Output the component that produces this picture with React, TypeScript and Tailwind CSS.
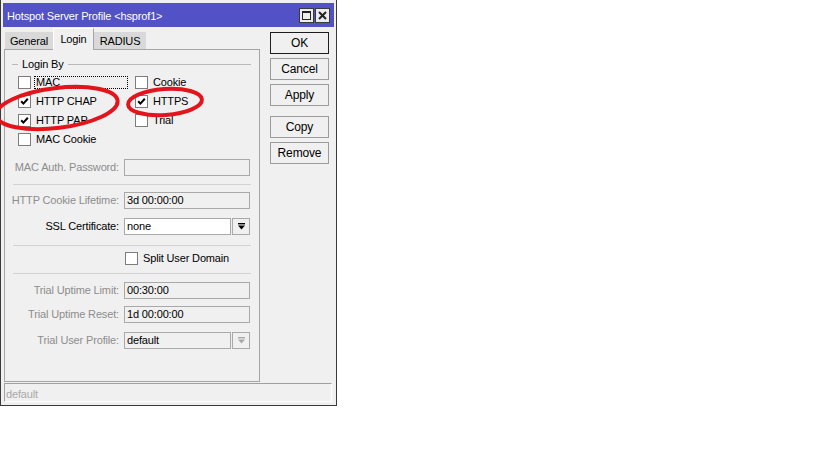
import React from "react";

function Check({ checked }: { checked?: boolean }) {
  return (
    <span className="flex h-[13px] w-[13px] shrink-0 items-center justify-center border border-[#7d7d7d] bg-white">
      {checked && (
        <svg width="9" height="9" viewBox="0 0 9 9">
          <path d="M1.2 4.2 L3.4 6.6 L7.8 1.8" stroke="#000" strokeWidth="2" fill="none" />
        </svg>
      )}
    </span>
  );
}

function DropIcon({ disabled }: { disabled?: boolean }) {
  const c = disabled ? "#a8a8a8" : "#000";
  return (
    <svg width="9" height="9" viewBox="0 0 9 9">
      <rect x="1" y="1" width="7" height="1.4" fill={c} />
      <path d="M1 3.6 H8 L4.5 7.6 Z" fill={c} />
    </svg>
  );
}

function FieldRow({
  label,
  value,
  disabled,
  white,
  dropdown,
  className,
}: {
  label: string;
  value?: string;
  disabled?: boolean;
  white?: boolean;
  dropdown?: boolean;
  className: string;
}) {
  return (
    <div className={`flex h-[17px] items-center ${className}`}>
      <span className={`w-[114px] text-right ${disabled ? "text-[#8d8d8d]" : "text-black"}`}>{label}</span>
      <div className="ml-[5px] flex h-full w-[126px] gap-px">
        <div
          className={`flex flex-1 items-center border border-[#a9a9a9] px-[2px] ${
            white ? "bg-white" : "bg-[#f0f0f0]"
          }`}
        >
          {value}
        </div>
        {dropdown && (
          <div className="flex w-[18px] items-center justify-center border border-[#a9a9a9] bg-[#f0f0f0]">
            <DropIcon disabled={disabled} />
          </div>
        )}
      </div>
    </div>
  );
}

function Btn({ label, primary, className = "" }: { label: string; primary?: boolean; className?: string }) {
  return (
    <div
      className={`flex h-[22px] w-[59px] items-center justify-center border bg-[#f0f0f0] text-[12px] ${
        primary ? "border-[#1e1e1e]" : "border-[#9c9c9c]"
      } ${className}`}
    >
      {label}
    </div>
  );
}

const Sep = ({ className }: { className: string }) => (
  <div className={`mx-[8px] h-px bg-[#d2d2d2] ${className}`} />
);

export default function App() {
  return (
    <div className="h-[460px] w-[819px] bg-white font-['Liberation_Sans',Arial,sans-serif] text-[11px] leading-none tracking-[-0.15px] text-black">
      <div className="relative flex h-[406px] w-[337px] flex-col border-x border-b border-[#3a3a3a] bg-[#f0f0f0] px-[2px] pt-[3px]">
        {/* title bar */}
        <div className="flex h-[24px] items-center bg-[#5252c6] pl-[4px] pr-[4px] text-white">
          <span className="pt-[2px]">Hotspot Server Profile &lt;hsprof1&gt;</span>
          <div className="ml-auto flex gap-px">
            <div className="flex h-[15px] w-[15px] items-center justify-center border border-[#3a3a3a] bg-[#ececec]">
              <div className="h-[9px] w-[9px] border border-t-2 border-[#222]" />
            </div>
            <div className="flex h-[15px] w-[15px] items-center justify-center border border-[#3a3a3a] bg-[#ececec]">
              <svg width="9" height="9" viewBox="0 0 9 9">
                <path d="M1 1 L8 8 M8 1 L1 8" stroke="#222" strokeWidth="2" />
              </svg>
            </div>
          </div>
        </div>

        <div className="flex h-[356px]">
          {/* tabs and panel */}
          <div className="ml-px flex w-[256px] flex-col">
            <div className="flex h-[22px] items-end pl-px">
              <div className="flex h-[17px] w-[48px] items-center justify-center bg-[#d9d9d9] pt-px">General</div>
              <div className="relative z-10 -mb-px flex h-[22px] w-[41px] items-center justify-center border-x border-t border-l-white border-r-[#a5a5a5] border-t-white bg-[#f0f0f0] pb-px">
                Login
              </div>
              <div className="flex h-[17px] w-[52px] items-center justify-center bg-[#d9d9d9] pt-px">RADIUS</div>
            </div>
            <div className="flex h-[333px] flex-col border border-[#a5a5a5]">
              <div className="mt-[7px] flex h-[14px] items-center">
                <div className="ml-[7px] h-px w-[6px] bg-[#b9b9b9]" />
                <span className="ml-[4px]">Login By</span>
                <div className="ml-[4px] mr-[8px] h-px flex-1 bg-[#b9b9b9]" />
              </div>
              <div className="ml-[13px] mt-[2px] grid grid-cols-[117px_1fr]">
                <div className="flex h-[19px] items-center">
                  <Check />
                  <span className="ml-[3px] flex h-[13px] w-[94px] items-center border border-dotted border-black pl-px">
                    MAC
                  </span>
                </div>
                <div className="flex h-[19px] items-center">
                  <Check />
                  <span className="ml-[5px]">Cookie</span>
                </div>
                <div className="flex h-[19px] items-center">
                  <Check checked />
                  <span className="ml-[5px]">HTTP CHAP</span>
                </div>
                <div className="flex h-[19px] items-center">
                  <Check checked />
                  <span className="ml-[5px]">HTTPS</span>
                </div>
                <div className="flex h-[19px] items-center">
                  <Check checked />
                  <span className="ml-[5px]">HTTP PAP</span>
                </div>
                <div className="flex h-[19px] items-center">
                  <Check />
                  <span className="ml-[5px]">Trial</span>
                </div>
                <div className="flex h-[19px] items-center">
                  <Check />
                  <span className="ml-[5px]">MAC Cookie</span>
                </div>
              </div>

              <FieldRow className="mt-[10px]" label="MAC Auth. Password:" disabled />
              <Sep className="mt-[8px]" />
              <FieldRow className="mt-[7px]" label="HTTP Cookie Lifetime:" value="3d 00:00:00" disabled />
              <FieldRow className="mt-[9px]" label="SSL Certificate:" value="none" white dropdown />
              <Sep className="mt-[10px]" />
              <div className="ml-[120px] mt-[6px] flex h-[13px] items-center">
                <Check />
                <span className="ml-[5px]">Split User Domain</span>
              </div>
              <Sep className="mt-[8px]" />
              <FieldRow className="mt-[8px]" label="Trial Uptime Limit:" value="00:30:00" disabled />
              <FieldRow className="mt-[7px]" label="Trial Uptime Reset:" value="1d 00:00:00" disabled />
              <FieldRow className="mt-[9px]" label="Trial User Profile:" value="default" disabled dropdown />
            </div>
          </div>

          {/* buttons */}
          <div className="ml-[10px] flex flex-col gap-[4px] pt-[5px]">
            <Btn label="OK" primary />
            <Btn label="Cancel" />
            <Btn label="Apply" />
            <Btn label="Copy" className="mt-[6px]" />
            <Btn label="Remove" />
          </div>
        </div>

        {/* status bar */}
        <div className="ml-px flex h-[19px] w-[328px] items-center border border-b-white border-l-[#a0a0a0] border-r-white border-t-[#a0a0a0] pl-px pt-[3px] text-[#a9a9a9]">
          default
        </div>

        {/* red annotation marks */}
        <svg className="pointer-events-none absolute left-[-1px] top-0" width="337" height="406">
          <ellipse cx="57" cy="108" rx="61" ry="20" transform="rotate(-7 57 108)" fill="none" stroke="#e3141c" strokeWidth="4" />
          <ellipse cx="165" cy="102" rx="37" ry="13" transform="rotate(-4 165 102)" fill="none" stroke="#e3141c" strokeWidth="4" />
        </svg>
      </div>
    </div>
  );
}
